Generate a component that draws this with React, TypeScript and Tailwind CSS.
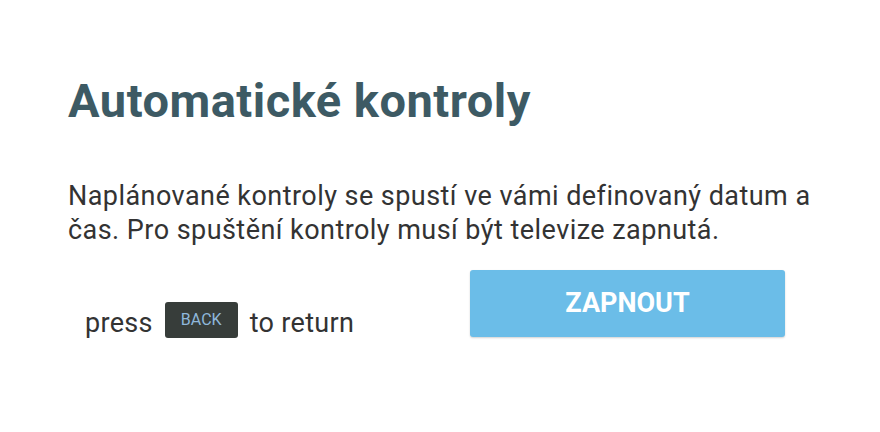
import React from "react";

export default function App() {
  return (
    <div
      className="w-[880px] h-[432px] bg-white overflow-hidden"
      style={{ fontFamily: "Roboto, 'Noto Sans', sans-serif" }}
    >
      <div className="pl-[68px] pt-[73px] pr-[50px]">
        <h1 className="text-[47px] leading-[56px] font-bold tracking-[0.5px] text-[#3d5a64]">
          Automatické kontroly
        </h1>
        <p className="mt-[50px] text-[27px] leading-[34px] tracking-[0.45px] text-[#333333]">
          Naplánované kontroly se spustí ve vámi definovaný datum a čas. Pro
          spuštění kontroly musí být televize zapnutá.
        </p>
        <div className="mt-[23px] flex items-start">
          <div className="mt-[32px] ml-[17px] flex items-end text-[27px] leading-[34px] tracking-[0.3px] text-[#333333] w-[385px]">
            <span>press</span>
            <span className="mx-[12px] mb-[2px] w-[73px] h-[36px] rounded-[3px] bg-[#373d3a] text-[#8fb8dc] text-[16px] tracking-normal leading-none flex items-center justify-center">
              BACK
            </span>
            <span>to return</span>
          </div>
          <button className="w-[315px] h-[67px] rounded-[3px] bg-[#6bbde8] text-white text-[27px] leading-none font-bold shadow-[0_1px_2px_rgba(0,0,0,0.18)]">
            ZAPNOUT
          </button>
        </div>
      </div>
    </div>
  );
}
